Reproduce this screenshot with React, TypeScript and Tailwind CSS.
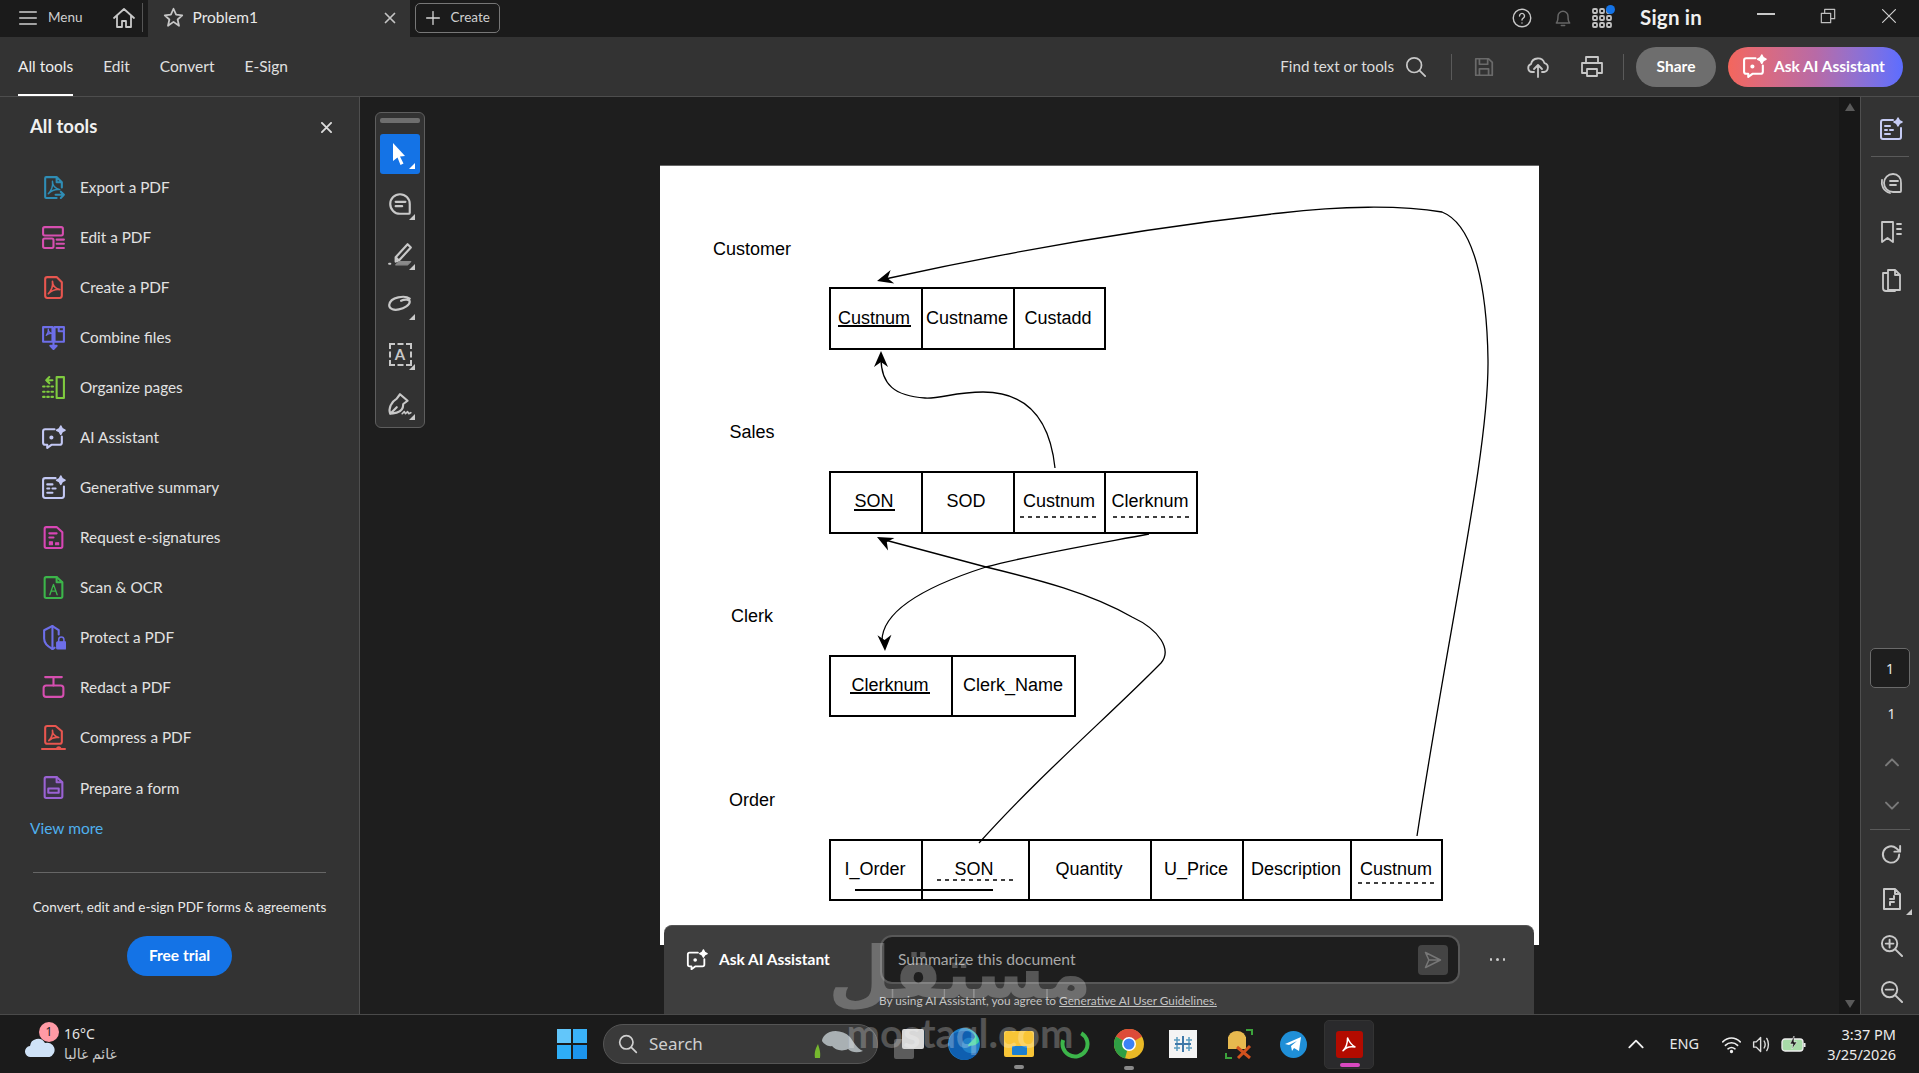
import React from "react";

const Ic = ({ s = 24, c = "currentColor", w = 2, children, vb = "0 0 24 24" }: { s?: number; c?: string; w?: number; children: React.ReactNode; vb?: string }) => (
  <svg width={s} height={s} viewBox={vb} fill="none" stroke={c} strokeWidth={w} strokeLinecap="round" strokeLinejoin="round" className="block shrink-0">
    {children}
  </svg>
);

const acro = "M7 18c3-3 4.5-8 4-12 0 4 3 7 7 8-4-.5-8 1-11 4z";

const Spark = ({ x = 18, y = 5, r = 4.5, c }: { x?: number; y?: number; r?: number; c: string }) => (
  <path d={`M${x} ${y - r}l${r * 0.35} ${r * 0.65} ${r * 0.65} ${r * 0.35} -${r * 0.65} ${r * 0.35} -${r * 0.35} ${r * 0.65} -${r * 0.35} -${r * 0.65} -${r * 0.65} -${r * 0.35} ${r * 0.65} -${r * 0.35}z`} fill={c} stroke={c} strokeWidth={1.5} />
);

const AiIcon = ({ c, s = 25 }: { c: string; s?: number }) => (
  <Ic s={s} c={c}>
    <path d="M13 4H4a2 2 0 0 0-2 2v11a2 2 0 0 0 2 2h2v3l4-3h8a2 2 0 0 0 2-2v-6" />
    <circle cx="10" cy="12" r="1" fill={c} />
    <Spark c={c} x={19} y={5} r={4} />
  </Ic>
);

const GenIcon = ({ c, s = 25 }: { c: string; s?: number }) => (
  <Ic s={s} c={c}>
    <path d="M14 3H4a2 2 0 0 0-2 2v15a2 2 0 0 0 2 2h16a2 2 0 0 0 2-2V11" />
    <path d="M6 9h5M6 13h2M11 13h3M6 17h5" />
    <Spark c={c} x={19} y={5} r={4} />
  </Ic>
);

const tools: { label: string; icon: React.ReactNode }[] = [
  { label: "Export a PDF", icon: <Ic s={25} c="#2f8db5"><path d="M15 2H5a1 1 0 0 0-1 1v18a1 1 0 0 0 1 1h10M15 2l5 5v5M15 2v5h5" /><path d={acro} strokeWidth={1.4} /><path d="M14 19h8M19 16l3 3-3 3" /></Ic> },
  { label: "Edit a PDF", icon: <Ic s={25} c="#d64fb0"><rect x="2" y="2" width="19" height="8" rx="1.5" /><rect x="2" y="13" width="10" height="9" rx="1.5" /><path d="M15 14h7M15 18h7M15 22h7" /></Ic> },
  { label: "Create a PDF", icon: <Ic s={25} c="#e8564f"><path d="M15 2H6a2 2 0 0 0-2 2v16a2 2 0 0 0 2 2h12a2 2 0 0 0 2-2V7z" /><path d={acro} strokeWidth={1.6} /></Ic> },
  { label: "Combine files", icon: <Ic s={25} c="#6d6ee8"><path d="M11 2H2v14h9zM13 2h9v14h-9zM17 2v4h5" /><path d={acro} transform="translate(1.5 1) scale(.5)" strokeWidth={2.4} /><path d="M12 16v6" /><path d="M9 20h6l-3 3z" fill="#6d6ee8" /></Ic> },
  { label: "Organize pages", icon: <Ic s={25} c="#7fcb3f"><rect x="15" y="2" width="7" height="20" /><path d="M11 5H5M5 5l3-3M5 5l3 3" /><path d="M2 11h10M2 16h10M2 21h10" strokeDasharray="1.5 2.5" /></Ic> },
  { label: "AI Assistant", icon: <AiIcon c="#c3c8f4" /> },
  { label: "Generative summary", icon: <GenIcon c="#c3c8f4" /> },
  { label: "Request e-signatures", icon: <Ic s={25} c="#d846b5"><path d="M15 2H5a1.500 1.500 0 0 0-1.500 1.500v17A1.500 1.500 0 0 0 5 22h14a1.500 1.500 0 0 0 1.500-1.500V7z" /><path d="M8 8h7M8 12h4" /><path d="M8 16h3v3H8zM14 17h3v2h-3z" fill="#d846b5" strokeWidth={1} /></Ic> },
  { label: "Scan & OCR", icon: <Ic s={25} c="#3cb54a"><path d="M15 2H5a1.500 1.500 0 0 0-1.500 1.500v17A1.500 1.500 0 0 0 5 22h14a1.500 1.500 0 0 0 1.500-1.500V7z" /><path d="M15 2v5h5" /><path d="M8.500 19l3.500-10 3.500 10M10 15.500h4" strokeWidth={1.3} /></Ic> },
  { label: "Protect a PDF", icon: <Ic s={25} c="#6d6ee8"><path d="M11 1L3 5v8c0 4 3 7.500 8 10 .8-.4 1.500-.8 2-1.200M11 1l6 4v4" /><path d="M11 1v22" /><rect x="15" y="16" width="9" height="7" rx="1" fill="#6d6ee8" strokeWidth={1} /><path d="M17 16v-2a2.500 2.500 0 0 1 5 0v2" strokeWidth={1.500} /></Ic> },
  { label: "Redact a PDF", icon: <Ic s={25} c="#d64fb0"><path d="M4 2h16M12 2v8" /><rect x="2.500" y="10" width="19" height="11" rx="2.500" /></Ic> },
  { label: "Compress a PDF", icon: <Ic s={25} c="#e8564f"><path d="M14 1H6a2 2 0 0 0-2 2v13a2 2 0 0 0 2 2h12a2 2 0 0 0 2-2V6z" /><path d="M7.500 15c2.500-2.500 4-6.500 3.500-10 0 3.500 2.500 6 6 7-3.500-.5-7 .5-9.500 3z" strokeWidth={1.500} /><path d="M1 23h22" /><circle cx="17" cy="23" r="1.500" fill="#e8564f" /></Ic> },
  { label: "Prepare a form", icon: <Ic s={25} c="#9a62d3"><path d="M15 2H5a1.500 1.500 0 0 0-1.500 1.500v17A1.500 1.500 0 0 0 5 22h14a1.500 1.500 0 0 0 1.500-1.500V7z" fill="#3a3346" /><path d="M15 2v5h5" /><rect x="7" y="13" width="10" height="4" /></Ic> },
];

const Tri = ({ className = "" }: { className?: string }) => (
  <span className={`absolute h-0 w-0 border-b-[6px] border-l-[6px] border-b-[#c9c9c9] border-l-transparent ${className}`} />
);

const Tool = ({ children }: { children: React.ReactNode }) => (
  <div className="relative flex h-[40px] w-[40px] items-center justify-center mt-[10px] text-[#c8c8c8]">
    {children}
    <Tri className="bottom-[4px] right-[5px]" />
  </div>
);

function Diagram() {
  const t = (x: number, y: number, s: string) => (
    <text x={x} y={y + 6} textAnchor="middle" fontFamily="'Liberation Sans', Arial, sans-serif" fontSize="18" fill="#000" stroke="none">{s}</text>
  );
  const box = (x1: number, y1: number, x2: number, y2: number, ds: number[]) => (
    <g>
      <rect x={x1} y={y1} width={x2 - x1} height={y2 - y1} fill="none" stroke="#000" strokeWidth="2" />
      {ds.map((d) => <line key={d} x1={d} x2={d} y1={y1} y2={y2} stroke="#000" strokeWidth="2" />)}
    </g>
  );
  const under = (a: number, b: number, y: number) => <line x1={a} x2={b} y1={y} y2={y} stroke="#000" strokeWidth="2" />;
  const dash = (a: number, b: number, y: number) => <line x1={a} x2={b} y1={y} y2={y} stroke="#000" strokeWidth="1.500" strokeDasharray="4 4" />;
  const head = (x: number, y: number, deg: number) => (
    <path d="M0 0L16 -7L11 0L16 7Z" transform={`translate(${x} ${y}) rotate(${deg})`} fill="#000" stroke="none" />
  );
  return (
    <svg width="878" height="779" viewBox="660 166 878 779" className="block">
      {t(752, 249, "Customer")}
      {t(752, 432, "Sales")}
      {t(752, 616, "Clerk")}
      {t(752, 800, "Order")}
      {box(830, 288, 1105, 349, [922, 1014])}
      {t(874, 318, "Custnum")}{t(967, 318, "Custname")}{t(1058, 318, "Custadd")}
      {under(838, 911, 326)}
      {box(830, 472, 1197, 533, [922, 1014, 1105])}
      {t(874, 501, "SON")}{t(966, 501, "SOD")}{t(1059, 501, "Custnum")}{t(1150, 501, "Clerknum")}
      {under(854, 895, 510)}
      {dash(1020, 1097, 517)}{dash(1113, 1190, 517)}
      {box(830, 656, 1075, 716, [952])}
      {t(890, 685, "Clerknum")}{t(1013, 685, "Clerk_Name")}
      {under(850, 930, 693)}
      {box(830, 840, 1442, 900, [922, 1029, 1151, 1243, 1351])}
      {t(875, 869, "I_Order")}{t(974, 869, "SON")}{t(1089, 869, "Quantity")}{t(1196, 869, "U_Price")}{t(1296, 869, "Description")}{t(1396, 869, "Custnum")}
      {dash(937, 1013, 880)}{dash(1358, 1435, 883)}
      {under(855, 993, 890)}
      <g fill="none" stroke="#000" strokeWidth="1.300">
        <path d="M1417 836C1450 620 1489 450 1488 360C1487 290 1475 225 1442 212C1400 205 1340 206 1281 213C1180 224 1040 245 885 279" />
        <path d="M1055 468C1050 420 1028 392 983 392C955 392 940 399 925 398C895 396 881 385 881 358" />
        <path d="M1149 534C1090 545 1030 555 986 567C930 585 881 610 882 642" />
        <path d="M979 843C1040 775 1110 715 1161 663C1172 650 1160 630 1132 617C1090 593 1040 580 986 567L885 540" />
      </g>
      {head(877, 281, -15)}
      {head(881, 351, 90)}
      {head(885, 651, -92)}
      {head(877, 537, 27)}
    </svg>
  );
}

export default function App() {
  return (
    <div className="relative flex h-[1073px] w-[1919px] flex-col overflow-hidden bg-[#1e1e1e] text-[#e8e8e8] font-['Lato','Noto_Sans',sans-serif]">
      {/* title bar */}
      <div className="flex h-[37px] items-center bg-[#1b1b1b] pb-[2px]">
        <div className="ml-[19px]"><Ic s={18} c="#d0d0d0" w={2}><path d="M1 4h22M1 12h22M1 20h22" /></Ic></div>
        <span className="ml-[11px] text-[13.5px] text-[#cfcfcf]">Menu</span>
        <div className="ml-[29px] text-[#c8c8c8]"><Ic s={24} c="#c8c8c8" w={1.800}><path d="M2 12L12 3l10 9M5 10v11h5v-6h4v6h5V10" /></Ic></div>
        <div className="ml-[6px] h-[29px] w-px bg-[#555]" />
        <div className="ml-[5px] flex h-[37px] w-[262px] items-center self-start bg-[#333] pb-[2px]">
          <div className="ml-[15px]"><Ic s={21} c="#c8c8c8" w={2}><path d="M12 2l3 6.800 7 .7-5.300 4.800 1.600 7.200L12 17l-6.300 4.500 1.600-7.200L2 9.500l7-.7z" /></Ic></div>
          <span className="ml-[9px] text-[15.5px] text-[#e8e8e8]">Problem1</span>
          <div className="ml-auto mr-[14px]"><Ic s={12} c="#c4c4c4" w={3.500}><path d="M3 3l18 18M21 3L3 21" /></Ic></div>
        </div>
        <div className="ml-[5px] flex h-[30px] w-[85px] items-center rounded-[5px] border border-[#777] pl-[10px]">
          <Ic s={14} c="#d8d8d8" w={2.200}><path d="M12 1v22M1 12h22" /></Ic>
          <span className="ml-[11px] text-[13.5px] text-[#cfcfcf]">Create</span>
        </div>
        <div className="ml-auto flex items-center">
          <Ic s={20} c="#c8c8c8" w={1.700}><circle cx="12" cy="12" r="10.500" /><path d="M9 9.500a3 3 0 1 1 4.500 2.600c-1 .6-1.500 1.200-1.500 2.400M12 18v.1" /></Ic>
          <div className="ml-[21px]"><Ic s={20} c="#666" w={1.800}><path d="M4 18c2-2 2-4 2-8a6 6 0 0 1 12 0c0 4 0 6 2 8zM10 21h4" /></Ic></div>
          <div className="relative ml-[19px]">
            <svg width="20" height="20" viewBox="0 0 20 20" className="block">
              {[1, 8, 15].flatMap((x) => [1, 8, 15].map((y) => <rect key={`${x}${y}`} x={x} y={y} width="4" height="4" rx="1" fill="none" stroke="#c0c0c0" strokeWidth="1.800" />))}
            </svg>
            <span className="absolute right-[-3px] top-[-3px] h-[9px] w-[9px] rounded-full bg-[#1473e6]" />
          </div>
          <span className="ml-[28px] mb-[1px] text-[20.5px] font-bold leading-[24px] tracking-[0.2px] text-[#f0f0f0]">Sign in</span>
          <div className="ml-[55px] mb-[8px] h-[2px] w-[18px] bg-[#c8c8c8]" />
          <div className="ml-[45px] mb-[4px]"><Ic s={16} c="#c0c0c0" w={1.800}><path d="M2 8h14v14H2zM7 8V2h15v14h-6" /></Ic></div>
          <div className="ml-[46px] mr-[23px] mb-[4px]"><Ic s={14} c="#d0d0d0" w={2}><path d="M1 1l22 22M23 1L1 23" /></Ic></div>
        </div>
      </div>

      {/* toolbar */}
      <div className="flex h-[60px] items-center border-b border-[#4d4d4d] bg-[#333]">
        <div className="relative ml-[18px] flex h-full items-center">
          <span className="text-[15.5px] text-[#eeeeee]">All tools</span>
          <span className="absolute bottom-0 left-0 right-0 h-[2px] bg-white" />
        </div>
        <span className="ml-[30px] text-[15.5px] text-[#e0e0e0]">Edit</span>
        <span className="ml-[30px] text-[15.5px] text-[#e0e0e0]">Convert</span>
        <span className="ml-[30px] text-[15.5px] text-[#e0e0e0]">E-Sign</span>
        <div className="ml-auto mr-[16px] flex items-center">
          <span className="text-[15.2px] text-[#dcdcdc]">Find text or tools</span>
          <div className="ml-[11px]"><Ic s={22} c="#c8c8c8" w={1.900}><circle cx="10" cy="10" r="8" /><path d="M16 16l6 6" /></Ic></div>
          <div className="ml-[24px] h-[26px] w-px bg-[#5a5a5a]" />
          <div className="ml-[21px]"><Ic s={22} c="#6a6a6a" w={1.900}><path d="M3 3h14l4 4v14H3zM7 3v6h9V3M7 21v-7h10v7" /></Ic></div>
          <div className="ml-[31px]"><Ic s={24} c="#c8c8c8" w={1.800}><path d="M8 17H6a4 4 0 0 1-1-7.800 7 7 0 0 1 13.500-1A4.500 4.500 0 0 1 18 17h-2M12 22V11M8 14l4-4 4 4" /></Ic></div>
          <div className="ml-[30px]"><Ic s={24} c="#c8c8c8" w={1.800}><path d="M6 8V2h12v6M6 18H2V8h20v10h-4M7 14h10v7H7z" /></Ic></div>
          <div className="ml-[19px] h-[26px] w-px bg-[#5a5a5a]" />
          <div className="ml-[12px] flex h-[40px] w-[80px] items-center justify-center rounded-full bg-[#6e6e6e] text-[15.5px] font-bold text-white">Share</div>
          <div className="ml-[12px] flex h-[40px] w-[175px] items-center rounded-full bg-gradient-to-r from-[#f4665c] via-[#b86aa6] to-[#5c6dff] pl-[14px] text-white">
            <AiIcon c="#ffffff" s={25} />
            <span className="ml-[7px] text-[15.500px] font-bold">Ask AI Assistant</span>
          </div>
        </div>
      </div>

      {/* main */}
      <div className="flex min-h-0 flex-1">
        {/* sidebar */}
        <aside className="flex w-[360px] shrink-0 flex-col border-r border-[#4f4f4f] bg-[#333]">
          <div className="flex h-[65px] items-start pl-[30px] pr-[27px] pt-[16px]">
            <span className="text-[18.5px] font-bold text-[#f0f0f0]">All tools</span>
            <div className="ml-auto mt-[9px]"><Ic s={11} c="#dcdcdc" w={4}><path d="M2 2l20 20M22 2L2 22" /></Ic></div>
          </div>
          {tools.map((t) => (
            <div key={t.label} className="flex h-[50.08px] items-center pl-[41px]">
              {t.icon}
              <span className="ml-[14px] text-[15.3px] text-[#e2e2e2]">{t.label}</span>
            </div>
          ))}
          <span className="ml-[30px] mt-[5px] text-[15.5px] leading-[20px] text-[#4fb0ee]">View more</span>
          <div className="mx-[33px] mt-[34px] h-px bg-[#666]" />
          <p className="mt-[24px] text-center text-[13.5px] leading-[20px] text-[#eaeaea]">Convert, edit and e-sign PDF forms &amp; agreements</p>
          <button className="mx-auto mt-[19px] flex h-[40px] w-[105px] items-center justify-center rounded-full bg-[#1473e6] text-[15.5px] font-bold text-white">Free trial</button>
        </aside>

        {/* canvas */}
        <div className="relative flex min-w-0 flex-1 items-start overflow-hidden bg-[#1e1e1e]">
          <div className="ml-[15px] mt-[15px] flex h-[316px] w-[50px] shrink-0 flex-col items-center rounded-[6px] border border-[#5e5e5e] bg-[#323232]">
            <div className="mt-[5px] h-[5px] w-[40px] rounded-[2px] bg-[#6e6e6e]" />
            <div className="relative mt-[11px] flex h-[40px] w-[40px] items-center justify-center rounded-[3px] bg-[#1473e6]">
              <svg width="20" height="24" viewBox="0 0 20 24" className="block"><path d="M3 1l12 13-5 .5 3.500 7-3 1.500-3-7.500L3 19z" fill="#fff" /></svg>
              <Tri className="bottom-[5px] right-[5px] border-b-white" />
            </div>
            <Tool><Ic s={26} c="#c8c8c8" w={2}><path d="M12 3a9 9 0 1 0 0 18h8a1 1 0 0 0 1-1v-8a9 9 0 0 0-9-9z" /><path d="M8 10h9M8 14h6" /></Ic></Tool>
            <Tool><Ic s={26} c="#c8c8c8" w={2}><path d="M8 15L19 3l3 3-11 12-3 1zM8 15l3 3" /><path d="M2 21h1" /><path d="M8 22h11l3-3H11z" fill="#8a8a8a" stroke="#8a8a8a" strokeWidth={1} /></Ic></Tool>
            <Tool><Ic s={26} c="#c8c8c8" w={2}><path d="M21 7C17 4 3 5 2 13c0 4 5 5 9 4 5-1 10-4 10-7 0-2-4-3-8-1" /></Ic></Tool>
            <Tool>
              <div className="flex h-[23px] w-[23px] items-center justify-center border-2 border-dashed border-[#c8c8c8] text-[15px] font-bold leading-none text-[#c8c8c8]">A</div>
            </Tool>
            <Tool><Ic s={26} c="#c8c8c8" w={2}><path d="M3 21c-2-5 1-11 6-14l3-4 7 6-4 3c0 4-2 7-6 8-2 .5-4 1-6 1zM3 21l6-6" /><path d="M14 21l2-2 1 2 2-2 1 2 2-1" strokeWidth={1.500} /></Ic></Tool>
          </div>

          <div className="ml-[235px] mt-[68px] w-[879px] shrink-0 border-t border-[#666] bg-white">
            <Diagram />
          </div>

          {/* AI bar overlay */}
          <div className="absolute bottom-0 left-[304px] h-[89px] w-[870px] rounded-t-[8px] border-t border-[#555] bg-[#3e3e3e]">
            <div className="flex h-[67px] items-center">
              <div className="ml-[22px]"><AiIcon c="#ffffff" s={22} /></div>
              <span className="ml-[11px] text-[15.5px] font-bold text-white">Ask AI Assistant</span>
              <div className="ml-[50px] flex h-[49px] w-[580px] items-center rounded-[12px] border-2 border-[#585858] bg-[#1e1e1e] pl-[16px] pr-[10px]">
                <span className="text-[15.7px] text-[#a8a8a8]">Summarize this document</span>
                <div className="ml-auto flex h-[30px] w-[30px] items-center justify-center rounded-[4px] bg-[#444]">
                  <Ic s={20} c="#777" w={1.800}><path d="M3 3l18 9-18 9 4-9zM7 12h14" /></Ic>
                </div>
              </div>
              <span className="ml-[30px] flex gap-[4px]">
                <i className="h-[2.500px] w-[2.500px] rounded-full bg-[#ccc]" /><i className="h-[2.500px] w-[2.500px] rounded-full bg-[#ccc]" /><i className="h-[2.500px] w-[2.500px] rounded-full bg-[#ccc]" />
              </span>
            </div>
            <p className="ml-[215px] text-[11.8px] leading-[16px] text-[#c4c4c4]">By using AI Assistant, you agree to <span className="underline">Generative AI User Guidelines.</span></p>
          </div>
        </div>

        {/* scrollbar */}
        <div className="flex w-[21px] shrink-0 flex-col items-center justify-between bg-[#181818] py-[6px]">
          <span className="h-0 w-0 border-x-[5px] border-b-[8px] border-x-transparent border-b-[#5a5a5a]" />
          <span className="h-0 w-0 border-x-[5px] border-t-[8px] border-x-transparent border-t-[#5a5a5a]" />
        </div>

        {/* right rail */}
        <div className="flex w-[59px] shrink-0 flex-col items-center border-l border-[#4f4f4f] bg-[#333]">
          <div className="ml-[1px] mt-[20px]"><GenIcon c="#c5cbf4" s={24} /></div>
          <div className="mt-[15px] h-px w-[38px] bg-[#5a5a5a]" />
          <div className="ml-[1px] mt-[14px]"><Ic s={24} c="#c8c8c8" w={1.800}><path d="M14 3a9 9 0 0 0-9 9c0 5 4 9 9 9h7a1 1 0 0 0 1-1v-8a8 8 0 0 0-8-9z" /><path d="M3 9c-1 5 1 11 8 13M11 10h8M11 14h6" /></Ic></div>
          <div className="ml-[1px] mt-[25px]"><Ic s={24} c="#c8c8c8" w={1.800}><path d="M3 2h11v20l-5.500-4L3 22zM18 4h4M18 9h4M18 14h4" /></Ic></div>
          <div className="ml-[1px] mt-[24px]"><Ic s={24} c="#c8c8c8" w={1.800}><path d="M9 2h7l5 5v15H9zM16 2v5h5M9 5H4v15q0 3 3 3h9" /></Ic></div>

          <div className="mt-auto flex flex-col items-center">
            <div className="flex h-[40px] w-[40px] items-center justify-center rounded-[5px] border border-[#6a6a6a] bg-[#1e1e1e] text-[14px] text-[#e8e8e8] font-['Noto_Sans',sans-serif]">1</div>
            <span className="mt-[16px] ml-[3px] text-[14px] leading-[20px] text-[#e8e8e8] font-['Noto_Sans',sans-serif]">1</span>
            <div className="ml-[3px] mt-[30px]"><Ic s={16} c="#7a7a7a" w={3}><path d="M3 17l9-9 9 9" /></Ic></div>
            <div className="ml-[3px] mt-[28px]"><Ic s={16} c="#7a7a7a" w={3}><path d="M3 7l9 9 9-9" /></Ic></div>
            <div className="mt-[15px] h-px w-[40px] bg-[#5a5a5a]" />
            <div className="ml-[3px] mt-[13px]"><Ic s={23} c="#c8c8c8" w={2}><path d="M20 12a8.500 8.500 0 1 1-3-6.500L21 9M21 3v6h-6" /></Ic></div>
            <div className="relative ml-[3px] mt-[21px]"><Ic s={24} c="#c8c8c8" w={2}><path d="M4 2h11l5 5v15H4zM15 2v5h5M10 12h4v-3M14 15h-4v3" /></Ic><Tri className="bottom-[-4px] right-[-8px]" /></div>
            <div className="ml-[3px] mt-[23px]"><Ic s={23} c="#c8c8c8" w={2}><circle cx="10" cy="10" r="8" /><path d="M16 16l7 7M6 10h8M10 6v8" /></Ic></div>
            <div className="ml-[3px] mt-[23px] mb-[11px]"><Ic s={23} c="#c8c8c8" w={2}><circle cx="10" cy="10" r="8" /><path d="M16 16l7 7M6 10h8" /></Ic></div>
          </div>
        </div>
      </div>

      {/* taskbar */}
      <div className="flex h-[59px] shrink-0 items-center border-t border-[#4a4a4a] bg-[#1b1b1b]">
        <div className="relative ml-[25px] h-[40px] w-[32px]">
          <svg width="31" height="22" viewBox="0 0 31 22" className="absolute bottom-[6px] left-0 block"><path d="M6 21a5.500 5.500 0 0 1-1-11 8 8 0 0 1 15-3 6.500 6.500 0 0 1 4.500 14z" fill="#cfe2f7" /></svg>
          <span className="absolute left-[14px] top-[-2px] flex h-[20px] w-[20px] items-center justify-center rounded-full bg-[#ff9aa5] text-[12px] text-[#222] font-['Noto_Sans',sans-serif]">1</span>
        </div>
        <div className="ml-[7px] flex w-[65px] flex-col font-['Noto_Sans','DejaVu_Sans',sans-serif] text-[14px] leading-[20px] text-[#e4e4e4]">
          <span>16°C</span>
          <span className="self-start text-[#c8c8c8]" dir="rtl">غائم غالبا</span>
        </div>

        <div className="ml-[428px] shrink-0">
          <svg width="30" height="30" viewBox="0 0 30 30" className="block">
            <rect width="14" height="14" fill="#62c6fa" /><rect x="16" width="14" height="14" fill="#3ab2f8" /><rect y="16" width="14" height="14" fill="#2eaef7" /><rect x="16" y="16" width="14" height="14" fill="#1c95ee" />
          </svg>
        </div>
        <div className="ml-[16px] flex h-[40px] w-[275px] items-center rounded-full border border-[#555] bg-[#3a3a3a] pl-[14px]">
          <Ic s={20} c="#d0d0d0" w={2}><circle cx="10" cy="10" r="8" /><path d="M16 16l6 6" /></Ic>
          <span className="ml-[11px] font-['Noto_Sans',sans-serif] text-[17px] text-[#cfcfcf]">Search</span>
          <svg width="54" height="30" viewBox="0 0 54 30" className="ml-auto mr-[10px] block">
            <path d="M12 6c6-6 18-5 25 2 4 5 6 11 13 14-5 2-11 2-15-2-6 3-13 1-16-3-4 1-8-2-10-5 0-2 1-4 3-6z" fill="#a9b0b3" />
            <path d="M2 29c-1-6 1-10 3-14 1 4 3 8 2 14z" fill="#76b82e" />
          </svg>
        </div>
        <div className="relative ml-[16px] h-[30px] w-[30px] shrink-0">
          <span className="absolute bottom-0 left-0 h-[20px] w-[20px] rounded-[2px] bg-[#5c5c5c]" />
          <span className="absolute right-0 top-0 h-[20px] w-[22px] rounded-[2px] bg-[#d8d8d8]" />
        </div>
        <svg width="32" height="32" viewBox="0 0 32 32" className="ml-[24px] block shrink-0">
          <circle cx="16" cy="16" r="16" fill="#1f7fc8" />
          <path d="M16 32A16 16 0 0 1 3 8c4-5 22-10 27 6-6-7-16-5-16 3 0 5 5 9 11 8 4 0 5-1 5-1-3 5-8 8-14 8z" fill="#0f5fb0" />
          <path d="M20 18c3 0 12-1 11-6-2-7-9-12-16-12 8 1 12 6 12 9-2 4-7 6-7 9z" fill="#3ad0a0" />
        </svg>
        <div className="relative ml-[24px] h-[26px] w-[30px] shrink-0 rounded-[2px] bg-[#f8c537]">
          <span className="absolute left-[8px] top-[15px] h-[9px] w-[15px] rounded-[1px] bg-[#1c7fd0]" />
          <span className="absolute bottom-[-12px] left-[10px] h-[4px] w-[10px] rounded-full bg-[#8a8a8a]" />
        </div>
        <svg width="30" height="30" viewBox="0 0 30 30" className="ml-[26px] block shrink-0">
          <circle cx="15" cy="15" r="12.500" fill="none" stroke="#3cb54a" strokeWidth="4" strokeDasharray="56 22" transform="rotate(-60 15 15)" />
        </svg>
        <div className="relative ml-[24px] shrink-0">
          <svg width="30" height="30" viewBox="0 0 30 30" className="block">
            <circle cx="15" cy="15" r="15" fill="#e9b926" />
            <path d="M15 15L2 7.500A15 15 0 0 1 28 7.500z" fill="#dd4b39" />
            <path d="M15 15L2 7.500A15 15 0 0 0 11 29.500z" fill="#2f9e44" />
            <circle cx="15" cy="15" r="7" fill="#fff" /><circle cx="15" cy="15" r="5.500" fill="#3b82f6" />
          </svg>
          <span className="absolute bottom-[-11px] left-[10px] h-[4px] w-[10px] rounded-full bg-[#8a8a8a]" />
        </div>
        <svg width="28" height="28" viewBox="0 0 28 28" className="ml-[25px] block shrink-0">
          <rect width="28" height="28" fill="#f4f4f4" />
          <path d="M14 6v16M6 14h16" stroke="#3f78a8" strokeWidth="2" />
          <path d="M8 7v6M5 10h6M20 7v6M17 10h6M8 15v6M5 18h6M20 15v6M17 18h6" stroke="#5a9cc0" strokeWidth="1.500" />
        </svg>
        <svg width="28" height="30" viewBox="0 0 28 30" className="ml-[28px] block shrink-0">
          <ellipse cx="12" cy="10" rx="9" ry="8" fill="#e7b94f" /><rect x="3" y="8" width="18" height="12" fill="#e7b94f" />
          <path d="M1 24v5h6M21 1h6v5" stroke="#3ca33c" strokeWidth="2" fill="none" />
          <path d="M12 18l13 11M25 17L13 29" stroke="#d2521e" strokeWidth="3" />
        </svg>
        <svg width="27" height="27" viewBox="0 0 27 27" className="ml-[27px] block shrink-0">
          <circle cx="13.500" cy="13.500" r="13.500" fill="#1f8fd8" />
          <path d="M5 13l16-7-2 14-5-3-2 3-1-5 6-5-8 4z" fill="#fff" />
        </svg>
        <div className="relative ml-[17px] flex h-[49px] w-[50px] shrink-0 items-center justify-center rounded-[5px] border border-[#333] bg-[#2a2a2c]">
          <div className="flex h-[27px] w-[27px] items-center justify-center rounded-[3px] bg-[#b30b00]">
            <Ic s={18} c="#ffffff" w={2}><path d="M4 21c4-4 6-11 6-16 0-4 1 6 10 11-5-1-12 0-16 5z" /></Ic>
          </div>
          <span className="absolute bottom-[1px] left-[15px] h-[4px] w-[20px] rounded-full bg-[#d948c0]" />
        </div>

        <div className="ml-auto flex items-center font-['Noto_Sans',sans-serif]">
          <Ic s={16} c="#f0f0f0" w={2.800}><path d="M2 17l10-10 10 10" /></Ic>
          <span className="ml-[26px] text-[14.5px] text-[#e8e8e8]">ENG</span>
          <div className="ml-[22px]"><Ic s={21} c="#eeeeee" w={1.800}><path d="M2 9c6-6 14-6 20 0M5 13c4-4 10-4 14 0M8 17c2.500-2 5.500-2 8 0" /><circle cx="12" cy="20" r="1" fill="#eee" /></Ic></div>
          <div className="ml-[9px]"><Ic s={21} c="#dddddd" w={1.600}><path d="M3 9v6h3l5 5V4L6 9zM15 8c1.500 2.500 1.500 5.500 0 8M18 5c2.500 4 2.500 10 0 14" /></Ic></div>
          <svg width="25" height="18" viewBox="0 0 25 18" className="ml-[9px] block">
            <rect x="1" y="4" width="21" height="12" rx="3" fill="#a8dba8" stroke="#eee" strokeWidth="1.300" /><rect x="22.500" y="8" width="2" height="4" fill="#eee" />
            <path d="M13 1l-4 8h3l-1 5 5-7h-3z" fill="#1b1b1b" stroke="#eee" strokeWidth=".6" />
          </svg>
          <div className="ml-[21px] mr-[23px] flex flex-col items-end text-[14.5px] leading-[20px] text-[#ececec]">
            <span>3:37 PM</span>
            <span>3/25/2026</span>
          </div>
        </div>
      </div>

      {/* watermark */}
      <div className="pointer-events-none absolute left-[840px] top-[931px] flex w-[240px] flex-col items-center text-[#ffffff40]">
        <span className="font-['DejaVu_Sans',sans-serif] text-[72px] font-bold leading-[84px]">مستقل</span>
        <span className="mt-[-2px] font-['Lato',sans-serif] text-[40px] font-bold leading-[40px]">mostaql.com</span>
      </div>
    </div>
  );
}
